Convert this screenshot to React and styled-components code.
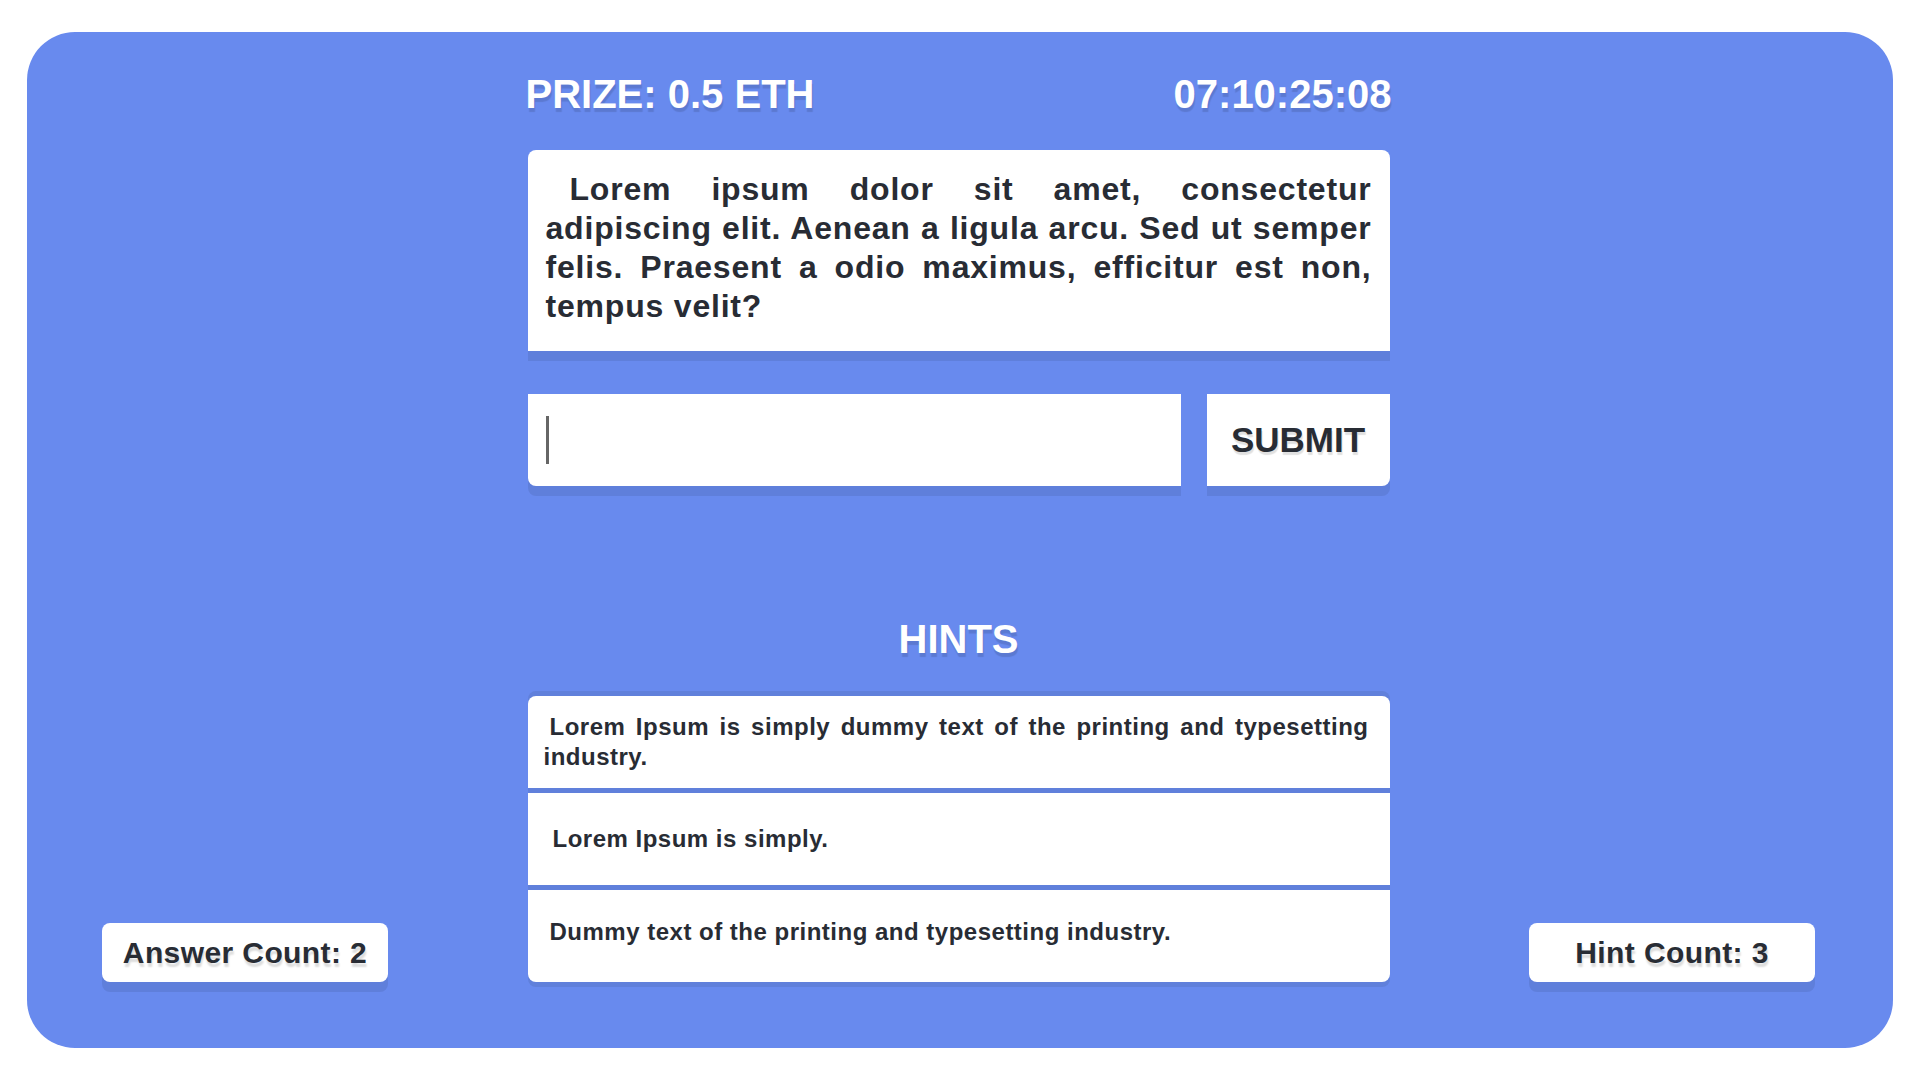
import React from "react";
import styled, { createGlobalStyle } from "styled-components";

const GlobalStyle = createGlobalStyle`
  * {
    box-sizing: border-box;
  }
  body {
    margin: 0;
    background: #fff;
    font-family: "Liberation Sans", Arial, sans-serif;
  }
`;

const shade = "rgba(0, 0, 0, 0.08)";
const ink = "#282c34";

const Page = styled.div`
  width: 1920px;
  height: 1080px;
  padding: 32px 27px;
`;

const Panel = styled.div`
  height: 1016px;
  background-color: #688aee;
  border-radius: 48px;
  padding: 42px 78px 61px 75px;
  display: grid;
  grid-template-columns: 1fr 862px 1fr;
`;

const Column = styled.div`
  display: flex;
  flex-direction: column;
`;

const Header = styled.div`
  display: flex;
  justify-content: space-between;
  margin: 0 -2px;
  color: #fff;
  font-size: 40px;
  line-height: 40px;
  font-weight: 700;
  text-shadow: 1px 4px 1px rgba(0, 0, 0, 0.12);
`;

const QuestionCard = styled.div`
  margin-top: 36px;
  height: 201px;
  background-color: #fff;
  border-radius: 8px 8px 0 0;
  box-shadow: 0 10px 0 ${shade};
  padding: 20px 18px 0 18px;
  color: ${ink};
  font-size: 32px;
  line-height: 39px;
  font-weight: 700;
  letter-spacing: 0.8px;
  text-align: justify;
  text-indent: 24px;
`;

const AnswerRow = styled.div`
  margin-top: 43px;
  display: flex;
  gap: 26px;
  height: 92px;
`;

const InputBox = styled.label`
  flex: 1;
  display: flex;
  align-items: center;
  background-color: #fff;
  border-radius: 0 0 0 8px;
  box-shadow: 0 10px 0 ${shade};
  padding-left: 18px;
  cursor: text;
`;

const Caret = styled.span`
  width: 3px;
  height: 48px;
  background-color: #666;
`;

const Input = styled.input`
  flex: 1;
  height: 100%;
  border: none;
  outline: none;
  background: transparent;
  font-family: inherit;
  font-size: 40px;
  color: ${ink};
  caret-color: transparent;
`;

const SubmitButton = styled.button`
  width: 183px;
  border: none;
  background-color: #fff;
  border-radius: 0 0 8px 0;
  box-shadow: 0 10px 0 ${shade};
  color: ${ink};
  font-family: inherit;
  font-size: 35px;
  font-weight: 700;
  text-shadow: 1px 3px 1px rgba(0, 0, 0, 0.12);
  cursor: pointer;
`;

const HintsTitle = styled.h2`
  margin: 133px 0 0;
  text-align: center;
  color: #fff;
  font-size: 40px;
  line-height: 40px;
  font-weight: 700;
  text-shadow: 1px 4px 1px rgba(0, 0, 0, 0.12);
`;

const HintList = styled.div`
  margin-top: 32px;
  display: flex;
  flex-direction: column;
  gap: 5px;
  padding: 5px 0;
  background-color: #6080db;
  border-radius: 8px;
`;

const Hint = styled.div`
  height: 92px;
  display: flex;
  align-items: center;
  background-color: #fff;
  padding: 0 21px 0 16px;
  color: ${ink};
  font-size: 24px;
  line-height: 30px;
  font-weight: 700;
  letter-spacing: 0.5px;

  &:first-child {
    border-radius: 8px 8px 0 0;
  }
  &:last-child {
    border-radius: 0 0 8px 8px;
    padding-bottom: 8px;
  }
`;

const HintText = styled.p`
  margin: 0;
  width: 100%;
  text-align: justify;
  text-indent: ${(props) => props.indent || 6}px;
`;

const CountBadge = styled.div`
  align-self: end;
  justify-self: ${(props) => (props.right ? "end" : "start")};
  margin-bottom: 5px;
  width: 286px;
  height: 59px;
  display: flex;
  align-items: center;
  justify-content: center;
  background-color: #fff;
  border-radius: 8px;
  box-shadow: 0 10px 0 ${shade};
  color: ${ink};
  font-size: 30px;
  font-weight: 700;
  letter-spacing: 0.4px;
  text-shadow: 1px 4px 2px rgba(0, 0, 0, 0.14);
`;

const hints = [
  "Lorem Ipsum is simply dummy text of the printing and typesetting industry.",
  "Lorem Ipsum is simply.",
  "Dummy text of the printing and typesetting industry.",
];

const App = () => {
  return (
    <Page>
      <GlobalStyle />
      <Panel>
        <CountBadge>Answer Count: 2</CountBadge>
        <Column>
          <Header>
            <span>PRIZE: 0.5 ETH</span>
            <span>07:10:25:08</span>
          </Header>
          <QuestionCard>
            Lorem ipsum dolor sit amet, consectetur adipiscing elit. Aenean a
            ligula arcu. Sed ut semper felis. Praesent a odio maximus,
            efficitur est non, tempus velit?
          </QuestionCard>
          <AnswerRow>
            <InputBox>
              <Caret />
              <Input type="text" />
            </InputBox>
            <SubmitButton>SUBMIT</SubmitButton>
          </AnswerRow>
          <HintsTitle>HINTS</HintsTitle>
          <HintList>
            {hints.map((text, index) => (
              <Hint key={index}>
                <HintText indent={index === 1 ? 9 : 6}>{text}</HintText>
              </Hint>
            ))}
          </HintList>
        </Column>
        <CountBadge right>Hint Count: 3</CountBadge>
      </Panel>
    </Page>
  );
};

export default App;
